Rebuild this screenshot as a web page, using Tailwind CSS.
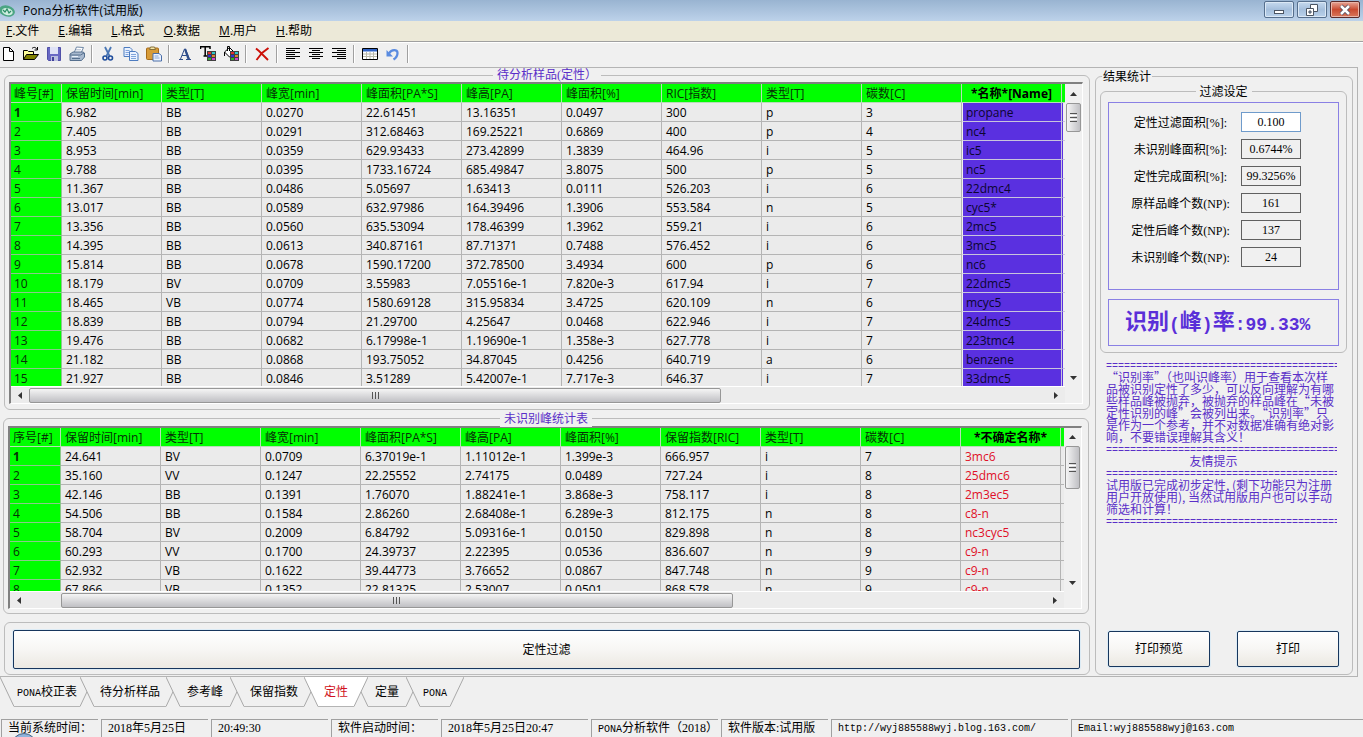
<!DOCTYPE html>
<html lang="zh-CN">
<head>
<meta charset="utf-8">
<title>Pona分析软件(试用版)</title>
<script src="https://cdn.jsdelivr.net/npm/@tailwindcss/browser@4"></script>
</head>
<body class="flex h-screen flex-col overflow-hidden bg-[#f0f0f0] font-['Liberation_Serif','Noto_Sans_CJK_SC',sans-serif] text-xs text-black">

<header class="flex h-[21px] shrink-0 items-center bg-linear-to-b from-[#99b4d1] to-[#bdd2ea] font-['Open_Sans','Noto_Sans_CJK_SC',sans-serif]">
  <svg class="h-4 w-[17px]" viewBox="0 0 17 16"><ellipse cx="7" cy="8" rx="8" ry="5.5" fill="#4ba583" transform="rotate(15 7 8)"/><ellipse cx="7.500" cy="8.500" rx="5.500" ry="3.500" fill="#cfeee0" transform="rotate(15 7 8)"/><path d="M3 7l2 2 2-3 2 4 2-2" fill="none" stroke="#2c8d68" stroke-width="1.200"/></svg>
  <h1 class="ml-1.5 flex-1 text-xs">Pona分析软件(试用版)</h1>
  <div class="flex gap-[3px] self-start pr-[3px] pt-px">
    <button aria-label="最小化" class="flex h-[17px] w-[30px] items-center justify-center rounded-xs border border-[#566f8d] bg-linear-to-b from-[#c6d9ee] via-[#a5bfdc] to-[#bad2eb] shadow-[inset_0_0_0_1px_#dbe8f5]"><svg class="size-3" viewBox="0 0 12 12"><rect x="1.500" y="6.500" width="9" height="3" fill="#fff" stroke="#4b5563"/></svg></button>
    <button aria-label="还原" class="flex h-[17px] w-[30px] items-center justify-center rounded-xs border border-[#566f8d] bg-linear-to-b from-[#c6d9ee] via-[#a5bfdc] to-[#bad2eb] shadow-[inset_0_0_0_1px_#dbe8f5]"><svg class="size-3" viewBox="0 0 12 12" fill="#fff" stroke="#4b5563"><path d="M4.500.5h7v7h-7z"/><path d="M.5 4.500h7v7h-7z"/><path d="M3 7h2v2H3z" fill="#a5bfdc"/></svg></button>
    <button aria-label="关闭" class="flex h-[17px] w-[30px] items-center justify-center rounded-xs border border-[#5b2a2a] bg-linear-to-b from-[#e5a496] via-[#c94a30] to-[#d9775c] shadow-[inset_0_0_0_1px_#eab5a8]"><svg class="size-3" viewBox="0 0 12 12"><path d="M2 2l8 8M10 2l-8 8" stroke="#4b4b60" stroke-width="4"/><path d="M2 2l8 8M10 2l-8 8" stroke="#fff" stroke-width="2.500"/></svg></button>
  </div>
</header>

<nav class="flex h-[21px] shrink-0 items-center gap-[19px] border-b border-[#a0a0a0] bg-[#ece9d8] pl-1.5 font-['Open_Sans','Noto_Sans_CJK_SC',sans-serif]">
  <button><u>F</u>.文件</button><button><u>E</u>.编辑</button><button><u>L</u>.格式</button><button><u>O</u>.数据</button><button><u>M</u>.用户</button><button><u>H</u>.帮助</button>
</nav>

<div role="toolbar" class="flex h-[25px] shrink-0 items-center border-t border-white pb-0.5 [&>button]:flex [&>button]:w-[23px] [&>button]:justify-center [&>i]:mx-[3px] [&>i]:h-[18px] [&>i]:w-0.5 [&>i]:border-l [&>i]:border-r [&>i]:border-l-[#a0a0a0] [&>i]:border-r-white [&_svg]:size-4">
  <button aria-label="新建" class="-ml-1"><svg viewBox="0 0 16 16"><path d="M3.500 1.500h6l4 4v9h-10z M9.500 1.500v4h4" fill="#fff" stroke="#000"/></svg></button>
  <button aria-label="打开"><svg viewBox="0 0 16 16"><path d="M.5 13.500v-9h4l1 1h5v3" fill="#ffff9a" stroke="#000"/><path d="M.5 13.500l3-5h12l-4 5z" fill="#808000" stroke="#000"/><path d="M9 2.500c2-2 4-1 5 1M14.500 1v3h-3" fill="none" stroke="#000"/></svg></button>
  <button aria-label="保存"><svg viewBox="0 0 16 16"><path d="M1.500 1.500h13v13h-12l-1-1z" fill="#6868c4" stroke="#5050a8"/><path d="M4 1h8v7H4z" fill="#dfe2f6"/><path d="M5 10h7v5H5z" fill="#b9bfe0"/><path d="M6 11h2v4H6z" fill="#40409a"/></svg></button>
  <button aria-label="打印"><svg viewBox="0 0 16 16"><path d="M5 7l2.500-6 7 .5L12 7z" fill="#fff" stroke="#6f87a5"/><path d="M1 8l3-2h10l1.500 1v4l-3 3.500H1z" fill="#a8b9cf" stroke="#56708e"/><path d="M1 9h10.500l3.500-2M3 12.500h8" fill="none" stroke="#56708e"/><path d="M3 10.500h6" stroke="#e8f0fa"/><path d="M7 3.500h5M6.500 5h5" stroke="#a6b4c8" stroke-width=".7"/></svg></button>
  <i></i>
  <button aria-label="剪切"><svg viewBox="0 0 16 16" fill="none"><path d="M5 1l4.500 9M11 1L6.500 10" stroke="#4a77b5" stroke-width="1.800"/><circle cx="5" cy="12" r="2" stroke="#1f4d9c" stroke-width="1.600"/><circle cx="10.500" cy="12" r="2" stroke="#1f4d9c" stroke-width="1.600"/></svg></button>
  <button aria-label="复制"><svg viewBox="0 0 16 16" stroke="#4d7cc0"><path d="M1 1.500h6l2 2v7H1z" fill="#eaf2ff"/><path d="M2.500 4.500h4M2.500 6.500h4M2.500 8.500h3" stroke="#7fa4dc"/><path d="M6.500 5.500h6l2.500 2v7H6.500z" fill="#eaf2ff"/><path d="M8 8.500h5M8 10.500h5M8 12.500h5" stroke="#7fa4dc"/></svg></button>
  <button aria-label="粘贴"><svg viewBox="0 0 16 16"><rect x=".5" y="2" width="12" height="11.500" rx="1" fill="#d79b38" stroke="#a56a18"/><path d="M3.500 3.500l1-2.500h4l1 2.500z" fill="#f4e6a8" stroke="#86703a"/><path d="M7 7.500h6l2.500 2v5.500H7z" fill="#edf3ff" stroke="#4a6ea8"/><path d="M8.500 10h4M8.500 12h5" stroke="#89a6d4"/></svg></button>
  <i></i>
  <button aria-label="字体"><svg viewBox="0 0 16 16"><path d="M3.500 13L7.500 3h1l4 10M5 9.500h5.500" fill="none" stroke="#2e4d8a"/><path d="M8 3l3.500 10" stroke="#2e4d8a" stroke-width="2.200"/><path d="M2 13.500h4M9 13.500h5" stroke="#2e4d8a"/></svg></button>
  <button aria-label="文字颜色"><svg viewBox="0 0 16 16"><path d="M.5 3V.8h9.500V3M5.200 1v9M3.500 10h3.500" fill="none" stroke="#000" stroke-width="1.500"/><path d="M7 5h9v10H7z" fill="#404040"/><path d="M8 6h3v2H8z" fill="#e03030"/><path d="M12 6h3v2h-3z" fill="#30c8c8"/><path d="M8 9h3v2H8z" fill="#3030d0"/><path d="M12 9h3v2h-3z" fill="#e08030"/><path d="M8 12h3v2H8z" fill="#30b030"/><path d="M12 12h3v2h-3z" fill="#d040d0"/></svg></button>
  <button aria-label="填充颜色"><svg viewBox="0 0 16 16"><path d="M1.500 6l5-4.500 5 5-5 4.500z" fill="#fff" stroke="#000"/><path d="M4.500 5V.5h2V5M1.500 6v4" fill="none" stroke="#000"/><path d="M7 5h9v10H7z" fill="#404040"/><path d="M8 6h3v2H8z" fill="#e03030"/><path d="M12 6h3v2h-3z" fill="#30c8c8"/><path d="M8 9h3v2H8z" fill="#3030d0"/><path d="M12 9h3v2h-3z" fill="#e08030"/><path d="M8 12h3v2H8z" fill="#30b030"/><path d="M12 12h3v2h-3z" fill="#d040d0"/></svg></button>
  <i></i>
  <button aria-label="删除"><svg viewBox="0 0 16 16"><path d="M2 2.500l3 2.500 9 9M14.500 2L8 7l-5.500 7" fill="none" stroke="#cc1008" stroke-width="1.900"/></svg></button>
  <i></i>
  <button aria-label="左对齐"><svg viewBox="0 0 16 16"><path d="M1 2.500h14M1 4.500h9M1 6.500h14M1 8.500h9M1 10.500h14M1 12.500h9" stroke="#000"/></svg></button>
  <button aria-label="居中"><svg viewBox="0 0 16 16"><path d="M1 2.500h14M4 4.500h8M1 6.500h14M4 8.500h8M1 10.500h14M4 12.500h8" stroke="#000"/></svg></button>
  <button aria-label="右对齐"><svg viewBox="0 0 16 16"><path d="M1 2.500h14M6 4.500h9M1 6.500h14M6 8.500h9M1 10.500h14M6 12.500h9" stroke="#000"/></svg></button>
  <i></i>
  <button aria-label="表格"><svg viewBox="0 0 16 16"><path d="M.5 2.500h15v11H.5z" fill="#fff" stroke="#000"/><path d="M1 3h14v2.500H1z" fill="#2f62c4"/><path d="M1 8h14M1 10.500h14M4.500 6v7M8 6v7M11.500 6v7" stroke="#b8b8a8"/></svg></button>
  <button aria-label="撤销"><svg viewBox="0 0 16 16"><path d="M4 7.500c2.500-4.500 8.500-4.500 8.500-.5 0 3-1.500 5-4 6.500" fill="none" stroke="#5a8be0" stroke-width="2.300"/><path d="M1.500 4v6.500H8z" fill="#5a8be0"/></svg></button>
  <i></i>
</div>

<main class="mr-[5px] flex min-h-0 flex-1 gap-[5px] border-y border-r border-[#b4b4b4] pb-px pl-1 pr-1 pt-[7px]">
  <div class="grid min-w-0 flex-1 grid-rows-[minmax(0,334fr)_minmax(0,195fr)_auto] gap-2">
    <section class="relative flex rounded-md border border-[#bcbcbc] pb-[5px] pl-1 pr-1.5 pt-1.5">
      <h2 class="absolute -top-2 left-1/2 -translate-x-1/2 bg-[#f0f0f0] px-1 leading-[14px] text-[#5a2fc8]">待分析样品(定性）</h2>
      <div class="grid min-w-0 flex-1 grid-cols-[minmax(0,1fr)_17px] grid-rows-[minmax(0,1fr)_17px] border-b border-l-2 border-r border-t-2 border-b-white border-l-[#808080] border-r-white border-t-[#808080]">
        <div class="overflow-hidden"><table id="samples" class="w-full table-fixed border-separate border-spacing-0 font-['Open_Sans','Noto_Sans_CJK_SC',sans-serif]"></table></div>
        <div class="flex flex-col items-center">
          <button aria-label="向上" class="flex h-[19px] items-center"><svg class="h-1 w-[7px]" viewBox="0 0 7 4"><path d="M0 4l3.500-4L7 4z" fill="#333"/></svg></button>
          <div class="flex h-[29px] w-[15px] flex-col items-center justify-center gap-px rounded-xs border border-[#979797] bg-linear-to-r from-[#f5f5f5] to-[#c0c0c4]"><b class="h-px w-[7px] bg-[#555]"></b><b class="h-px w-[7px] bg-white"></b><b class="h-px w-[7px] bg-[#555]"></b><b class="h-px w-[7px] bg-white"></b><b class="h-px w-[7px] bg-[#555]"></b></div>
          <div class="flex-1"></div>
          <button aria-label="向下" class="flex h-[17px] items-center"><svg class="h-1 w-[7px]" viewBox="0 0 7 4"><path d="M0 0l3.500 4L7 0z" fill="#333"/></svg></button>
        </div>
        <div class="flex items-center border-t border-white bg-[#ececec]">
          <button aria-label="向左" class="flex w-[18px] justify-center"><svg class="h-[7px] w-1" viewBox="0 0 4 7"><path d="M4 0L0 3.500 4 7z" fill="#333"/></svg></button>
          <div class="flex-1"><div class="flex h-[15px] w-[68%] items-center justify-center gap-0.5 rounded-xs border border-[#979797] bg-linear-to-b from-[#f5f5f5] to-[#c0c0c4]"><b class="h-[7px] w-px bg-[#555]"></b><b class="h-[7px] w-px bg-[#555]"></b><b class="h-[7px] w-px bg-[#555]"></b></div></div>
          <button aria-label="向右" class="flex w-[18px] justify-center"><svg class="h-[7px] w-1" viewBox="0 0 4 7"><path d="M0 0l4 3.500L0 7z" fill="#333"/></svg></button>
        </div>
      </div>
    </section>

    <section class="relative -ml-px mr-px flex rounded-md border border-[#bcbcbc] pb-1 pl-1 pr-1.5 pt-[7px]">
      <h2 class="absolute -top-2 left-1/2 -translate-x-1/2 bg-[#f0f0f0] px-1 leading-4 text-[#5a2fc8]">未识别峰统计表</h2>
      <div class="grid min-w-0 flex-1 grid-cols-[minmax(0,1fr)_17px] grid-rows-[minmax(0,1fr)_17px] border-b border-l-2 border-r border-t-2 border-b-white border-l-[#808080] border-r-white border-t-[#808080]">
        <div class="overflow-hidden"><table id="unknown" class="w-full table-fixed border-separate border-spacing-0 font-['Open_Sans','Noto_Sans_CJK_SC',sans-serif]"></table></div>
        <div class="flex flex-col items-center">
          <button aria-label="向上" class="flex h-[18px] items-center"><svg class="h-1 w-[7px]" viewBox="0 0 7 4"><path d="M0 4l3.500-4L7 4z" fill="#333"/></svg></button>
          <div class="flex h-[43px] w-[15px] flex-col items-center justify-center gap-px rounded-xs border border-[#979797] bg-linear-to-r from-[#f5f5f5] to-[#c0c0c4]"><b class="h-px w-[7px] bg-[#555]"></b><b class="h-px w-[7px] bg-white"></b><b class="h-px w-[7px] bg-[#555]"></b><b class="h-px w-[7px] bg-white"></b><b class="h-px w-[7px] bg-[#555]"></b></div>
          <div class="flex-1"></div>
          <button aria-label="向下" class="flex h-[17px] items-center"><svg class="h-1 w-[7px]" viewBox="0 0 7 4"><path d="M0 0l3.500 4L7 0z" fill="#333"/></svg></button>
        </div>
        <div class="flex items-center border-t border-white bg-[#ececec]">
          <button aria-label="向左" class="flex w-[18px] justify-center"><svg class="h-[7px] w-1" viewBox="0 0 4 7"><path d="M4 0L0 3.500 4 7z" fill="#333"/></svg></button>
          <div class="flex-1"><div class="ml-[33px] flex h-[15px] w-[66%] items-center justify-center gap-0.5 rounded-xs border border-[#979797] bg-linear-to-b from-[#f5f5f5] to-[#c0c0c4]"><b class="h-[7px] w-px bg-[#555]"></b><b class="h-[7px] w-px bg-[#555]"></b><b class="h-[7px] w-px bg-[#555]"></b></div></div>
          <button aria-label="向右" class="flex w-[18px] justify-center"><svg class="h-[7px] w-1" viewBox="0 0 4 7"><path d="M0 0l4 3.500L0 7z" fill="#333"/></svg></button>
        </div>
      </div>
    </section>

    <div class="flex rounded-md border border-[#bcbcbc] pb-[5px] pl-2 pr-[9px] pt-[7px]">
      <button class="h-[39px] flex-1 rounded-xs border border-[#17365d] bg-linear-to-b from-white via-[#f7f6f4] to-[#ece9e2] shadow-[0_0_0_1px_#dcebf5]">定性过滤</button>
    </div>
  </div>

  <aside class="relative mt-px flex w-[258px] shrink-0 flex-col rounded-md border border-[#bcbcbc] pb-[7px] pl-1 pr-[5px] pt-[14px]">
    <h2 class="absolute -top-2 left-1.5 bg-[#f0f0f0] px-px leading-4">结果统计</h2>
    <section class="relative rounded-md border border-[#bcbcbc] px-[7px] pb-1.5 pt-2.5">
      <h3 class="absolute -top-2 left-1/2 -translate-x-1/2 bg-[#f0f0f0] px-1 leading-4">过滤设定</h3>
      <div class="grid grid-cols-[minmax(0,1fr)_60px] content-start items-center gap-x-2 gap-y-[7px] border border-[#8a80e4] pb-[22px] pl-[19px] pr-[37px] pt-[9px] text-center [&>input]:h-5 [&>input]:border [&>input]:text-center [&>label]:whitespace-nowrap [&>label]:pt-0.5 [&>output]:h-5 [&>output]:border [&>output]:border-[#606060] [&>output]:leading-[18px]">
        <label for="f1">定性过滤面积[%]:</label><input id="f1" value="0.100" class="w-full border-[#6f9bcb] bg-white">
        <label for="f2">未识别峰面积[%]:</label><output id="f2">0.6744%</output>
        <label for="f3">定性完成面积[%]:</label><output id="f3">99.3256%</output>
        <label for="f4">原样品峰个数(NP):</label><output id="f4">161</output>
        <label for="f5">定性后峰个数(NP):</label><output id="f5">137</output>
        <label for="f6">未识别峰个数(NP):</label><output id="f6">24</output>
      </div>
      <p class="mt-[9px] flex h-[47px] items-center border border-[#8a80e4] pl-4 pt-1 font-['Liberation_Mono','Noto_Sans_CJK_SC',monospace] text-lg font-bold text-[#5a2fd8]"><span class="text-[22px]">识别</span>(<span class="text-[22px]">峰</span>)<span class="text-[22px]">率</span>:99.33%</p>
    </section>
    <div class="mt-2 overflow-hidden whitespace-nowrap px-1.5 font-['Noto_Sans_CJK_SC',sans-serif] leading-3 text-[#5a2fc8] [&>p]:h-3 [&>p]:leading-2 [&>pre]:mr-1 [&>pre]:h-3 [&>pre]:overflow-hidden [&>pre]:font-['Liberation_Mono',monospace] [&>pre]:text-[10px] [&>pre]:leading-3">
      <pre>=======================================</pre>
      <p>“识别率”（也叫识峰率）用于查看本次样</p>
      <p>品被识别定性了多少，可以反向理解为有哪</p>
      <p>些样品峰被抛弃，被抛弃的样品峰在“未被</p>
      <p>定性识别的峰”会被列出来。“识别率”只</p>
      <p>是作为一个参考，并不对数据准确有绝对影</p>
      <p>响，不要错误理解其含义！</p>
      <pre>=======================================</pre>
      <p class="pr-5 text-center">友情提示</p>
      <pre>=======================================</pre>
      <p>试用版已完成初步定性, (剩下功能只为注册</p>
      <p>用户开放使用), 当然试用版用户也可以手动</p>
      <p>筛选和计算！</p>
      <pre>=======================================</pre>
    </div>
    <div class="mt-auto flex justify-between px-2">
      <button class="h-9 w-[102px] rounded-xs border border-[#17365d] bg-linear-to-b from-white via-[#f7f6f4] to-[#ece9e2] shadow-[0_0_0_1px_#dcebf5]">打印预览</button>
      <button class="h-9 w-[102px] rounded-xs border border-[#17365d] bg-linear-to-b from-white via-[#f7f6f4] to-[#ece9e2] shadow-[0_0_0_1px_#dcebf5]">打印</button>
    </div>
  </aside>
</main>

<div id="tabs" role="tablist" class="flex h-[42px] shrink-0 items-start"></div>

<footer class="relative flex h-[18px] shrink-0 gap-[3px] overflow-hidden pl-px [&>*]:border-l [&>*]:border-t [&>*]:border-[#a0a0a0] [&>*]:pl-1.5 [&>*]:leading-[17px] [&>*]:whitespace-nowrap">
  <span class="w-[97px]">当前系统时间：</span>
  <span class="w-[107px]">2018年5月25日</span>
  <span class="w-[117px]">20:49:30</span>
  <span class="w-[107px]">软件启动时间：</span>
  <span class="w-[147px]">2018年5月25日20:47</span>
  <span class="w-[127px]"><span class="font-['Liberation_Mono',monospace] text-[10px]">PONA</span>分析软件（2018）</span>
  <span class="w-[107px]">软件版本:试用版</span>
  <a href="http://wyj885588wyj.blog.163.com/" class="w-[237px] font-['Liberation_Mono',monospace] text-[10px]">http://wyj885588wyj.blog.163.com/</a>
  <a href="mailto:wyj885588wyj@163.com" class="flex-1 font-['Liberation_Mono',monospace] text-[10px]">Email:wyj885588wyj@163.com</a>
  <svg class="absolute left-3 top-3.5 h-1.5 w-6 border-0! p-0!" viewBox="0 0 24 6"><circle cx="12" cy="13" r="12.500" fill="#8fb4dc" stroke="#46617f"/></svg>
</footer>

<script>
const samples = `6.982|BB|0.0270|22.61451|13.16351|0.0497|300|p|3|propane
7.405|BB|0.0291|312.68463|169.25221|0.6869|400|p|4|nc4
8.953|BB|0.0359|629.93433|273.42899|1.3839|464.96|i|5|ic5
9.788|BB|0.0395|1733.16724|685.49847|3.8075|500|p|5|nc5
11.367|BB|0.0486|5.05697|1.63413|0.0111|526.203|i|6|22dmc4
13.017|BB|0.0589|632.97986|164.39496|1.3906|553.584|n|5|cyc5*
13.356|BB|0.0560|635.53094|178.46399|1.3962|559.21|i|6|2mc5
14.395|BB|0.0613|340.87161|87.71371|0.7488|576.452|i|6|3mc5
15.814|BB|0.0678|1590.17200|372.78500|3.4934|600|p|6|nc6
18.179|BV|0.0709|3.55983|7.05516e-1|7.820e-3|617.94|i|7|22dmc5
18.465|VB|0.0774|1580.69128|315.95834|3.4725|620.109|n|6|mcyc5
18.839|BB|0.0794|21.29700|4.25647|0.0468|622.946|i|7|24dmc5
19.476|BB|0.0682|6.17998e-1|1.19690e-1|1.358e-3|627.778|i|7|223tmc4
21.182|BB|0.0868|193.75052|34.87045|0.4256|640.719|a|6|benzene
21.927|BB|0.0846|3.51289|5.42007e-1|7.717e-3|646.37|i|7|33dmc5`;
const unknown = `24.641|BV|0.0709|6.37019e-1|1.11012e-1|1.399e-3|666.957|i|7|3mc6
35.160|VV|0.1247|22.25552|2.74175|0.0489|727.24|i|8|25dmc6
42.146|BB|0.1391|1.76070|1.88241e-1|3.868e-3|758.117|i|8|2m3ec5
54.506|BB|0.1584|2.86260|2.68408e-1|6.289e-3|812.175|n|8|c8-n
58.704|BV|0.2009|6.84792|5.09316e-1|0.0150|829.898|n|8|nc3cyc5
60.293|VV|0.1700|24.39737|2.22395|0.0536|836.607|n|9|c9-n
62.932|VB|0.1622|39.44773|3.76652|0.0867|847.748|n|9|c9-n
67.866|VB|0.1352|22.81325|2.53007|0.0501|868.578|n|9|c9-n`;
function fill(id, heads, data, nameCell, tailCell) {
  const cols = '<colgroup><col class="w-[51px]">' + '<col class="w-[100px]">'.repeat(10) + '<col></colgroup>';
  const th = heads.map((h, i) => i === heads.length - 1
    ? `<th scope="col" class="h-[19px] overflow-hidden whitespace-nowrap border-b border-r border-[#b8dcb8] bg-[#00ff00] p-0 pt-0.5 text-center font-bold leading-4">${h}</th>`
    : `<th scope="col" class="h-[19px] overflow-hidden whitespace-nowrap border-b border-r border-[#b8dcb8] bg-[#00ff00] p-0 ${i ? 'pl-1' : 'pl-[3px]'} pt-0.5 text-left font-normal leading-4 text-[#063006]">${h}</th>`).join('');
  const rows = data.split('\n').map((line, r) => {
    const cells = line.split('|').map((c, i) => i === 9
      ? `<td class="${nameCell}">${c}</td>`
      : `<td class="h-[19px] border-b border-r border-[#b4b4b4] bg-[#ebebeb] p-0 pl-1 pt-0.5 leading-4">${c}</td>`).join('');
    const w = r === 0 ? 'font-bold' : 'font-normal';
    return `<tr><th scope="row" class="h-[19px] border-b border-r border-[#8cc88c] bg-[#00ff00] p-0 pl-[3px] pt-0.5 text-left leading-4 text-[#063006] ${w}">${r + 1}</th>${cells}<td class="${tailCell}"></td></tr>`;
  }).join('');
  document.getElementById(id).innerHTML = `${cols}<thead><tr>${th}<td class="bg-[#00ff00] border-b border-[#b8dcb8] p-0"></td></tr></thead><tbody>${rows}</tbody>`;
}
fill('samples', ['峰号[#]', '保留时间[min]', '类型[T]', '峰宽[min]', '峰面积[PA*S]', '峰高[PA]', '峰面积[%]', 'RIC[指数]', '类型[T]', '碳数[C]', '*名称*[Name]'], samples,
  'h-[19px] border-b border-r border-[#c8c4dc] border-l border-l-[#f0f0f0] bg-[#5a30e0] p-0 pl-[3px] pt-0.5 leading-4 text-[#0c0630]', 'border-b border-[#c8c4dc] border-l border-l-[#5a30e0] p-0');
fill('unknown', ['序号[#]', '保留时间[min]', '类型[T]', '峰宽[min]', '峰面积[PA*S]', '峰高[PA]', '峰面积[%]', '保留指数[RIC]', '类型[T]', '碳数[C]', '*不确定名称*'], unknown,
  'h-[19px] border-b border-r border-[#b4b4b4] bg-[#ebebeb] p-0 pl-1 pt-0.5 leading-4 text-[#e01028]', 'border-b border-[#b4b4b4] bg-[#ebebeb] p-0');

/* Trapezoid tabs: two slanted edges around a flat bottom edge; the active one lies on top. */
const tabs = [['<span class="font-[\'Liberation_Mono\',monospace] text-[10px]">PONA</span>校正表', 'w-[66px]'], ['待分析样品', 'w-[72px]'], ['参考峰', 'w-[50px]'], ['保留指数', 'w-[60px]'], ['定性', 'w-9'], ['定量', 'w-[38px]'], ['<span class="font-[\'Liberation_Mono\',monospace] text-[10px]">PONA</span>', 'w-[30px]']];
document.getElementById('tabs').innerHTML = tabs.map(([t, w], i) => {
  const on = i === 4, f = on ? '#ffffff' : '#f0f0f0';
  return `<button role="tab" aria-selected="${on}" class="relative flex h-[30px] ${i ? '-ml-3.5' : ''} ${on ? 'z-10 text-[#d01020]' : ''}">
    <svg class="h-[30px] w-3.5" viewBox="0 0 14 30"><path d="M0 0l14 29.500V0z" fill="${f}"/><path d="M0 0l14 29.500" stroke="#a8a8a8" fill="none"/></svg>
    <span class="flex h-[30px] ${w} items-center justify-center whitespace-nowrap border-b border-[#b4b4b4] pt-px ${on ? 'bg-white' : 'bg-[#f0f0f0]'}"><span>${t}</span></span>
    <svg class="h-[30px] w-3.5" viewBox="0 0 14 30"><path d="M14 0L0 29.500V0z" fill="${f}"/><path d="M14 0L0 29.500" stroke="#a8a8a8" fill="none"/></svg></button>`;
}).join('');
</script>
</body>
</html>
